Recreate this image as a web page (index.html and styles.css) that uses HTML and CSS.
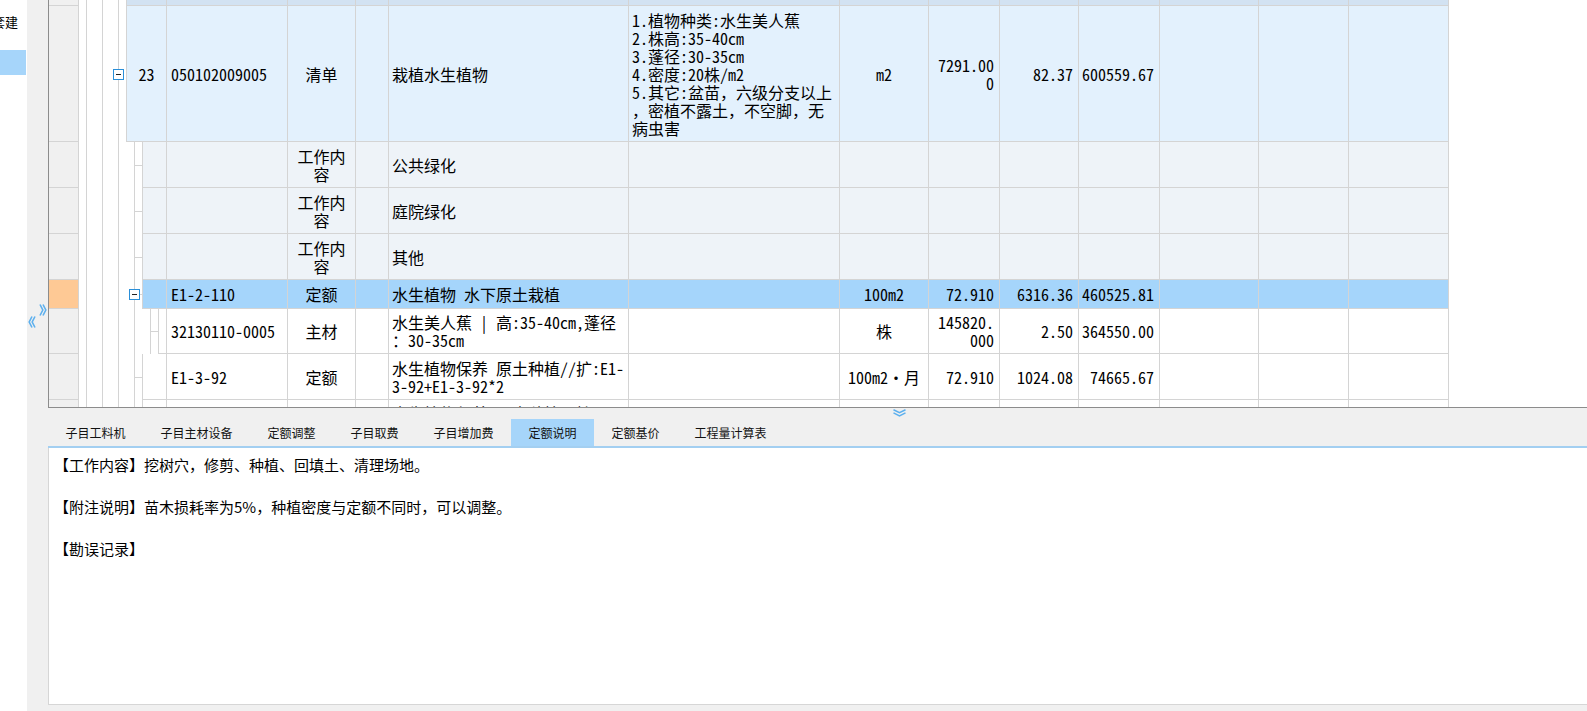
FILE: index.html
```html
<!DOCTYPE html>
<html lang="zh-CN">
<head>
<meta charset="utf-8">
<title>定额说明</title>
<link rel="stylesheet" href="styles.css">
</head>
<body>
<aside class="side">
  <div class="side-label">套建</div>
  <div class="side-sel"></div>
</aside>
<div class="band">
  <svg class="chev chev-r" width="8" height="14" viewBox="0 0 8 14"><path d="M1 1.5L3.8 7L1 12.5M4 1.5L6.8 7L4 12.5" fill="none" stroke="#5db0ee" stroke-width="1.6"/></svg>
  <svg class="chev chev-l" width="8" height="14" viewBox="0 0 8 14"><path d="M7 1.5L4.2 7L7 12.5M4 1.5L1.2 7L4 12.5" fill="none" stroke="#5db0ee" stroke-width="1.6"/></svg>
</div>
<main class="main">
  <section class="grid">
    <div class="row strip">
      <div class="rh"></div><div class="gut l1"></div>
      <div class="c c-no"></div><div class="c c-code"></div><div class="c c-type"></div><div class="c c-x"></div><div class="c c-name"></div><div class="c c-feat"></div><div class="c c-unit"></div><div class="c c-qty"></div><div class="c c-price"></div><div class="c c-total"></div><div class="c c-a"></div><div class="c c-b"></div><div class="c c-c"></div>
    </div>
    <div class="row r23">
      <div class="rh"></div>
      <div class="gut l1"><svg class="tog" width="11" height="11" viewBox="0 0 11 11"><rect x="0.5" y="0.5" width="10" height="10" fill="#fff" stroke="#2a8fd9"/><path d="M3 5.5h5" stroke="#222"/></svg></div>
      <div class="c c-no ctr">23</div><div class="c c-code">050102009005</div><div class="c c-type ctr">清单</div><div class="c c-x"></div><div class="c c-name">栽植水生植物</div>
      <div class="c c-feat">1.植物种类:水生美人蕉<br>2.株高:35-40cm<br>3.蓬径:30-35cm<br>4.密度:20株/m2<br>5.其它:盆苗，六级分支以上<br>，密植不露土，不空脚，无<br>病虫害</div>
      <div class="c c-unit ctr">m2</div><div class="c c-qty rt">7291.00<br>0</div><div class="c c-price rt">82.37</div><div class="c c-total rt">600559.67</div><div class="c c-a"></div><div class="c c-b"></div><div class="c c-c"></div>
    </div>
    <div class="row rw work">
      <div class="rh"></div><div class="gut l2"></div>
      <div class="c c-no"></div><div class="c c-code"></div><div class="c c-type ctr">工作内<br>容</div><div class="c c-x"></div><div class="c c-name">公共绿化</div><div class="c c-feat"></div><div class="c c-unit"></div><div class="c c-qty"></div><div class="c c-price"></div><div class="c c-total"></div><div class="c c-a"></div><div class="c c-b"></div><div class="c c-c"></div>
    </div>
    <div class="row rw work">
      <div class="rh"></div><div class="gut l2"></div>
      <div class="c c-no"></div><div class="c c-code"></div><div class="c c-type ctr">工作内<br>容</div><div class="c c-x"></div><div class="c c-name">庭院绿化</div><div class="c c-feat"></div><div class="c c-unit"></div><div class="c c-qty"></div><div class="c c-price"></div><div class="c c-total"></div><div class="c c-a"></div><div class="c c-b"></div><div class="c c-c"></div>
    </div>
    <div class="row rw work">
      <div class="rh"></div><div class="gut l2"></div>
      <div class="c c-no"></div><div class="c c-code"></div><div class="c c-type ctr">工作内<br>容</div><div class="c c-x"></div><div class="c c-name">其他</div><div class="c c-feat"></div><div class="c c-unit"></div><div class="c c-qty"></div><div class="c c-price"></div><div class="c c-total"></div><div class="c c-a"></div><div class="c c-b"></div><div class="c c-c"></div>
    </div>
    <div class="row rsel">
      <div class="rh"></div>
      <div class="gut l2"><svg class="tog" width="11" height="11" viewBox="0 0 11 11"><rect x="0.5" y="0.5" width="10" height="10" fill="#fff" stroke="#2a8fd9"/><path d="M3 5.5h5" stroke="#222"/></svg></div>
      <div class="c c-no"></div><div class="c c-code">E1-2-110</div><div class="c c-type ctr">定额</div><div class="c c-x"></div><div class="c c-name">水生植物 水下原土栽植</div><div class="c c-feat"></div><div class="c c-unit ctr">100m2</div><div class="c c-qty rt">72.910</div><div class="c c-price rt">6316.36</div><div class="c c-total rt">460525.81</div><div class="c c-a"></div><div class="c c-b"></div><div class="c c-c"></div>
    </div>
    <div class="row r45">
      <div class="rh"></div><div class="gut l3"></div>
      <div class="c c-no"></div><div class="c c-code">32130110-0005</div><div class="c c-type ctr">主材</div><div class="c c-x"></div><div class="c c-name">水生美人蕉 | 高:35-40cm,蓬径<br>：30-35cm</div><div class="c c-feat"></div><div class="c c-unit ctr">株</div><div class="c c-qty rt">145820.<br>000</div><div class="c c-price rt">2.50</div><div class="c c-total rt">364550.00</div><div class="c c-a"></div><div class="c c-b"></div><div class="c c-c"></div>
    </div>
    <div class="row rw">
      <div class="rh"></div><div class="gut l2"></div>
      <div class="c c-no"></div><div class="c c-code">E1-3-92</div><div class="c c-type ctr">定额</div><div class="c c-x"></div><div class="c c-name">水生植物保养 原土种植//扩:E1-<br>3-92+E1-3-92*2</div><div class="c c-feat"></div><div class="c c-unit ctr">100m2·月</div><div class="c c-qty rt">72.910</div><div class="c c-price rt">1024.08</div><div class="c c-total rt">74665.67</div><div class="c c-a"></div><div class="c c-b"></div><div class="c c-c"></div>
    </div>
    <div class="row rw">
      <div class="rh"></div><div class="gut l2"></div>
      <div class="c c-no"></div><div class="c c-code"></div><div class="c c-type"></div><div class="c c-x"></div><div class="c c-name top">水生植物保养 原土种植//扩:E1-</div><div class="c c-feat"></div><div class="c c-unit"></div><div class="c c-qty"></div><div class="c c-price"></div><div class="c c-total"></div><div class="c c-a"></div><div class="c c-b"></div><div class="c c-c"></div>
    </div>
  </section>
  <svg class="chev-d" width="15" height="8" viewBox="0 0 15 8"><path d="M1.5 0.8L7.5 3.6L13.5 0.8M1.5 3.8L7.5 6.8L13.5 3.8" fill="none" stroke="#5db0ee" stroke-width="1.5"/></svg>
  <nav class="tabs">
    <div class="tab">子目工料机</div>
    <div class="tab">子目主材设备</div>
    <div class="tab">定额调整</div>
    <div class="tab">子目取费</div>
    <div class="tab">子目增加费</div>
    <div class="tab on">定额说明</div>
    <div class="tab">定额基价</div>
    <div class="tab">工程量计算表</div>
  </nav>
  <div class="tabline"></div>
  <section class="panel">
    <p>【工作内容】挖树穴，修剪、种植、回填土、清理场地。</p>
    <p>【附注说明】苗木损耗率为5%，种植密度与定额不同时，可以调整。</p>
    <p>【勘误记录】</p>
  </section>
</main>
</body>
</html>
```

FILE: styles.css
```css
* {
  box-sizing: border-box;
  margin: 0;
  padding: 0;
}

html, body {
  width: 1587px;
  height: 711px;
  overflow: hidden;
}

body {
  display: flex;
  background: #fff;
  font-family: "Noto Sans CJK SC", sans-serif;
  color: #000;
}

.side {
  width: 27px;
  flex: none;
  background: #fff;
  overflow: hidden;
}

.side-label {
  font-size: 13px;
  line-height: 18px;
  margin-top: 13px;
  margin-left: -8px;
  white-space: nowrap;
}

.side-sel {
  margin-top: 19px;
  width: 26px;
  height: 25px;
  background: #a6d5fa;
}

.band {
  width: 21px;
  flex: none;
  background: #f0f0f0;
  position: relative;
}

.chev {
  position: absolute;
  display: block;
}

.chev-r {
  left: 12px;
  top: 303px;
}

.chev-l {
  left: 1px;
  top: 315px;
}

.main {
  flex: 1;
  display: flex;
  flex-direction: column;
  background: #f0f0f0;
  position: relative;
}

.chev-d {
  position: absolute;
  left: 844px;
  top: 409px;
  display: block;
}

/* grid */
.grid {
  flex: none;
  height: 408px;
  background: #fff;
  border-left: 1px solid #8c8c8c;
  border-bottom: 1px solid #8c8c8c;
  overflow: hidden;
  font-family: "Noto Sans Mono CJK SC", "Noto Sans CJK SC", monospace;
  font-size: 16px;
  line-height: 18px;
}

.row {
  display: flex;
  flex: none;
}

.strip { height: 6px; }
.r23 { height: 136px; }
.rw { height: 46px; }
.rsel { height: 29px; }
.r45 { height: 45px; }

.rh {
  width: 30px;
  flex: none;
  background: #f0f0f0;
  border-right: 1px solid #d4d4d4;
  border-bottom: 1px solid #d4d4d4;
}

.rsel .rh {
  background: #fec995;
}

.gut {
  flex: none;
  display: flex;
  align-items: center;
  background-color: #fff;
  background-repeat: no-repeat;
  border-right: 1px solid #d4d4d4;
}

.gut.l1 {
  width: 48px;
  padding-left: 34px;
  background-image:
    linear-gradient(#d4d4d4, #d4d4d4),
    linear-gradient(#d4d4d4, #d4d4d4),
    linear-gradient(#d4d4d4, #d4d4d4);
  background-size: 1px 100%;
  background-position: 7px 0, 23px 0, 39px 0;
}

.gut.l2 {
  width: 64px;
  padding-left: 50px;
  background-image:
    linear-gradient(#d4d4d4, #d4d4d4),
    linear-gradient(#d4d4d4, #d4d4d4),
    linear-gradient(#d4d4d4, #d4d4d4),
    linear-gradient(#d4d4d4, #d4d4d4),
    linear-gradient(#d4d4d4, #d4d4d4);
  background-size: 1px 100%, 1px 100%, 1px 100%, 1px 100%, 8px 1px;
  background-position: 7px 0, 23px 0, 39px 0, 55px 0, 55px 50%;
}

.gut.l3 {
  width: 80px;
  background-image:
    linear-gradient(#d4d4d4, #d4d4d4),
    linear-gradient(#d4d4d4, #d4d4d4),
    linear-gradient(#d4d4d4, #d4d4d4),
    linear-gradient(#d4d4d4, #d4d4d4),
    linear-gradient(#d4d4d4, #d4d4d4),
    linear-gradient(#d4d4d4, #d4d4d4);
  background-size: 1px 100%, 1px 100%, 1px 100%, 1px 100%, 1px 100%, 8px 1px;
  background-position: 7px 0, 23px 0, 39px 0, 55px 0, 71px 0, 71px 50%;
}

.tog {
  display: block;
  flex: none;
}

.c {
  flex: none;
  display: flex;
  align-items: center;
  padding: 0 3px;
  white-space: nowrap;
  overflow: hidden;
  border-right: 1px solid #d4d4d4;
  border-bottom: 1px solid #d4d4d4;
}

.c.top {
  align-items: flex-start;
  padding-top: 4px;
}

.ctr {
  justify-content: center;
  text-align: center;
}

.rt {
  justify-content: flex-end;
  text-align: right;
  padding-right: 5px;
}

.c-no { width: 40px; }
.l2 + .c-no { width: 24px; }
.l3 + .c-no { width: 8px; }
.c-code { width: 121px; padding-left: 4px; }
.c-type { width: 68px; }
.c-x { width: 33px; }
.c-name { width: 240px; }
.c-feat { width: 211px; }
.c-unit { width: 89px; }
.c-qty { width: 71px; }
.c-price { width: 79px; }
.c-total { width: 81px; }
.c-a { width: 99px; }
.c-b { width: 90px; }
.c-c { width: 100px; }

.strip .c { background: #d2e2f2; }
.r23 .c { background: #e3f1fd; }
.work .c { background: #eef3f8; }
.rsel .c { background: #a5d5fb; }

/* tabs */
.tabs {
  flex: none;
  height: 38px;
  display: flex;
  align-items: flex-end;
}

.tab {
  height: 27px;
  padding: 0 17.5px;
  display: flex;
  align-items: center;
  font-size: 12px;
  line-height: 17px;
  color: #111;
  white-space: nowrap;
}

.tab.on {
  background: #a6d5fa;
}

.tabline {
  flex: none;
  height: 2px;
  background: #a3cff1;
}

.panel {
  flex: none;
  height: 257px;
  background: #fff;
  border-left: 1px solid #d6d6d6;
  border-bottom: 1px solid #d6d6d6;
  padding: 6px 0 0 5px;
  font-size: 15px;
  line-height: 21px;
}

.panel p {
  margin-bottom: 21px;
}
```
